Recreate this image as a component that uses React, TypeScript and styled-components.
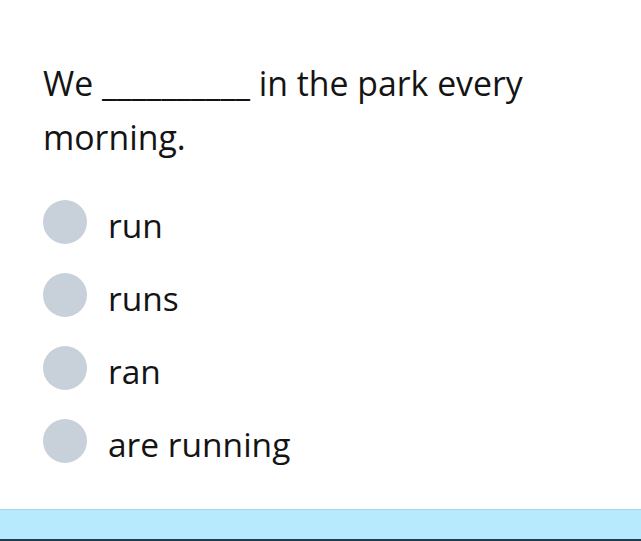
import React from "react";
import styled, { createGlobalStyle } from "styled-components";

const Global = createGlobalStyle`
  html, body { margin: 0; padding: 0; background: #ffffff; }
  body { font-family: "Open Sans", "Noto Sans", sans-serif; color: #141414; }
`;

const Page = styled.div`
  width: 641px;
  height: 541px;
  display: flex;
  flex-direction: column;
  overflow: hidden;
`;

const Content = styled.main`
  flex: 1;
  padding: 56px 43px 0 43px;
  display: flex;
  flex-direction: column;
`;

const Question = styled.p`
  margin: 0;
  font-size: 33.8px;
  line-height: 54px;
  width: 520px;
`;

const Options = styled.ul`
  list-style: none;
  margin: 36px 0 0 0;
  padding: 0;
  display: flex;
  flex-direction: column;
  gap: 29px;
`;

const Option = styled.li`
  display: flex;
  align-items: center;
  gap: 21px;
  height: 44px;
`;

const Radio = styled.span`
  width: 44px;
  height: 44px;
  border-radius: 50%;
  background: #c8d0da;
  flex-shrink: 0;
`;

const Label = styled.span`
  font-size: 33.5px;
  line-height: 44px;
  padding-top: 6px;
  color: #141414;
`;

const Footer = styled.footer`
  height: 29px;
  background: #b8eafd;
  border-top: 1px solid #a9d7e8;
  border-bottom: 2px solid #1f3d4d;
`;

const options = ["run", "runs", "ran", "are running"];

export default function App() {
  return (
    <Page>
      <Global />
      <Content>
        <Question>We __________ in the park every morning.</Question>
        <Options>
          {options.map((o) => (
            <Option key={o}>
              <Radio />
              <Label>{o}</Label>
            </Option>
          ))}
        </Options>
      </Content>
      <Footer />
    </Page>
  );
}
